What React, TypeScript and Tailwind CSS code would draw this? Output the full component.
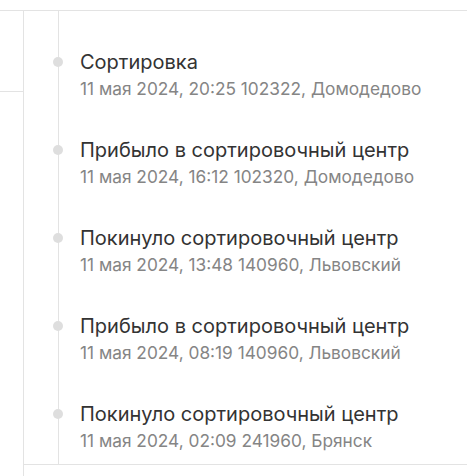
import React from "react";

const events = [
  { title: "Сортировка", info: "11 мая 2024, 20:25 102322, Домодедово" },
  { title: "Прибыло в сортировочный центр", info: "11 мая 2024, 16:12 102320, Домодедово" },
  { title: "Покинуло сортировочный центр", info: "11 мая 2024, 13:48 140960, Львовский" },
  { title: "Прибыло в сортировочный центр", info: "11 мая 2024, 08:19 140960, Львовский" },
  { title: "Покинуло сортировочный центр", info: "11 мая 2024, 02:09 241960, Брянск" },
];

const App = () => {
  return (
    <div
      className="h-[476px] w-[467px] bg-white pt-[10px] flex flex-col overflow-hidden"
      style={{ fontFamily: "Inter, 'Noto Sans', sans-serif" }}
    >
      <div className="flex-1 flex border-t border-[#e3e3e3]">
        {/* left rail */}
        <div className="w-[24px] border-r border-[#e3e3e3]">
          <div className="h-[81px] border-b border-[#e3e3e3]" />
        </div>

        {/* tracking history */}
        <div className="flex-1">
          <div className="ml-[34px] border-l border-[#e3e3e3] pt-[39px] pb-[11px] flex flex-col gap-[37px]">
            {events.map((ev, i) => (
              <div key={i} className="relative pl-[21px]">
                <span className="absolute left-[-6px] top-[7px] w-[10px] h-[10px] rounded-full bg-[#dedede]" />
                <div className="text-[20px] leading-[24px] text-[#333333]">{ev.title}</div>
                <div className="mt-[3px] text-[17.3px] leading-[24px] text-[#858585]">{ev.info}</div>
              </div>
            ))}
          </div>
          <div className="border-t border-[#e3e3e3]" />
        </div>
      </div>
    </div>
  );
};

export default App;
